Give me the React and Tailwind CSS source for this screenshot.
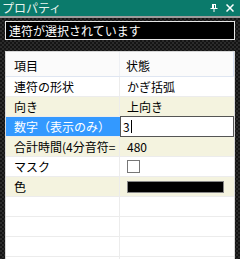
import React from "react";

const font = { fontFamily: '"Noto Sans CJK JP", "Noto Sans", sans-serif' };

function Row({ left, right, beige, children }) {
  return (
    <div className={`flex h-[20px] border-b border-[#ececec] ${beige ? "bg-[#f4f3df]" : "bg-white"}`}>
      <div className="w-[114px] shrink-0 flex items-center pl-[8px] border-r border-[#ececec] whitespace-nowrap overflow-hidden text-black">
        {left}
      </div>
      <div className="flex-1 flex items-center pl-[7px] text-black">{children ?? right}</div>
    </div>
  );
}

export default function App() {
  return (
    <div
      className="w-[240px] h-[259px] overflow-hidden bg-[#1c1c1c] bg-[repeating-conic-gradient(#2b2b2b_0%_25%,#141414_0%_50%)] bg-[length:4px_4px] text-[12px] leading-[14px]"
      style={font}
    >
      <div className="h-[16px] bg-[#0b7a6b] flex items-center justify-between pl-[2px] pr-[6px]">
        <span className="text-[#e8f4ee] text-[12px] leading-[14px]">プロパティ</span>
        <div className="flex items-center gap-[8px]">
          <svg width="8" height="8" viewBox="0 0 8 8" className="block">
            <path d="M2 0.5h4M2.5 0.5v4M5.5 0.5v4M3.5 0.5v4M0.5 4.5h7M4 4.5v3.5" stroke="#fff" strokeWidth="1" fill="none" />
          </svg>
          <svg width="8" height="8" viewBox="0 0 8 8" className="block">
            <path d="M0.5 0.5L7.5 7.5M7.5 0.5L0.5 7.5" stroke="#fff" strokeWidth="1.5" fill="none" />
          </svg>
        </div>
      </div>
      <div className="h-[2px] bg-[#9c9c9c]" />
      <div className="px-[5px] pt-[3px]">
        <div className="h-[19px] border border-[#e6e6e6] bg-black text-white flex items-center pl-[3px]">
          連符が選択されています
        </div>
      </div>
      <div className="mt-[11px] ml-[5px] mr-[5px] bg-white border border-[#d8d8d8]">
        <div className="flex h-[25px] bg-[#fbfbfb] border-b border-[#dfe6f2]">
          <div className="w-[114px] shrink-0 flex items-center pl-[8px] pt-[4px] text-black border-r border-[#eef0f4]">
            項目
          </div>
          <div className="flex-1 flex items-center pl-[6px] pt-[4px] text-black border-r border-[#dbe4f6]">
            状態
          </div>
        </div>
        <Row left="連符の形状" right="かぎ括弧" />
        <Row left="向き" right="上向き" beige />
        <div className="flex h-[20px] border-b border-[#ececec] bg-white">
          <div className="w-[114px] shrink-0 flex items-center pl-[8px] bg-[#3399ff] text-white whitespace-nowrap overflow-hidden">
            数字（表示のみ）
          </div>
          <div className="flex-1 flex items-center pl-[2px] border border-[#555] -mb-px -mt-px text-black">
            <span>3</span>
            <span className="w-px h-[13px] bg-black ml-px" />
          </div>
        </div>
        <Row left="合計時間(4分音符=" right="480" beige />
        <Row left="マスク">
          <div className="w-[13px] h-[13px] border border-[#777] bg-white" />
        </Row>
        <Row left="色" beige>
          <div className="w-[97px] h-[12px] bg-black border border-[#888]" />
        </Row>
        <Row left="" />
        <Row left="" />
        <Row left="" />
        <Row left="" />
      </div>
    </div>
  );
}
